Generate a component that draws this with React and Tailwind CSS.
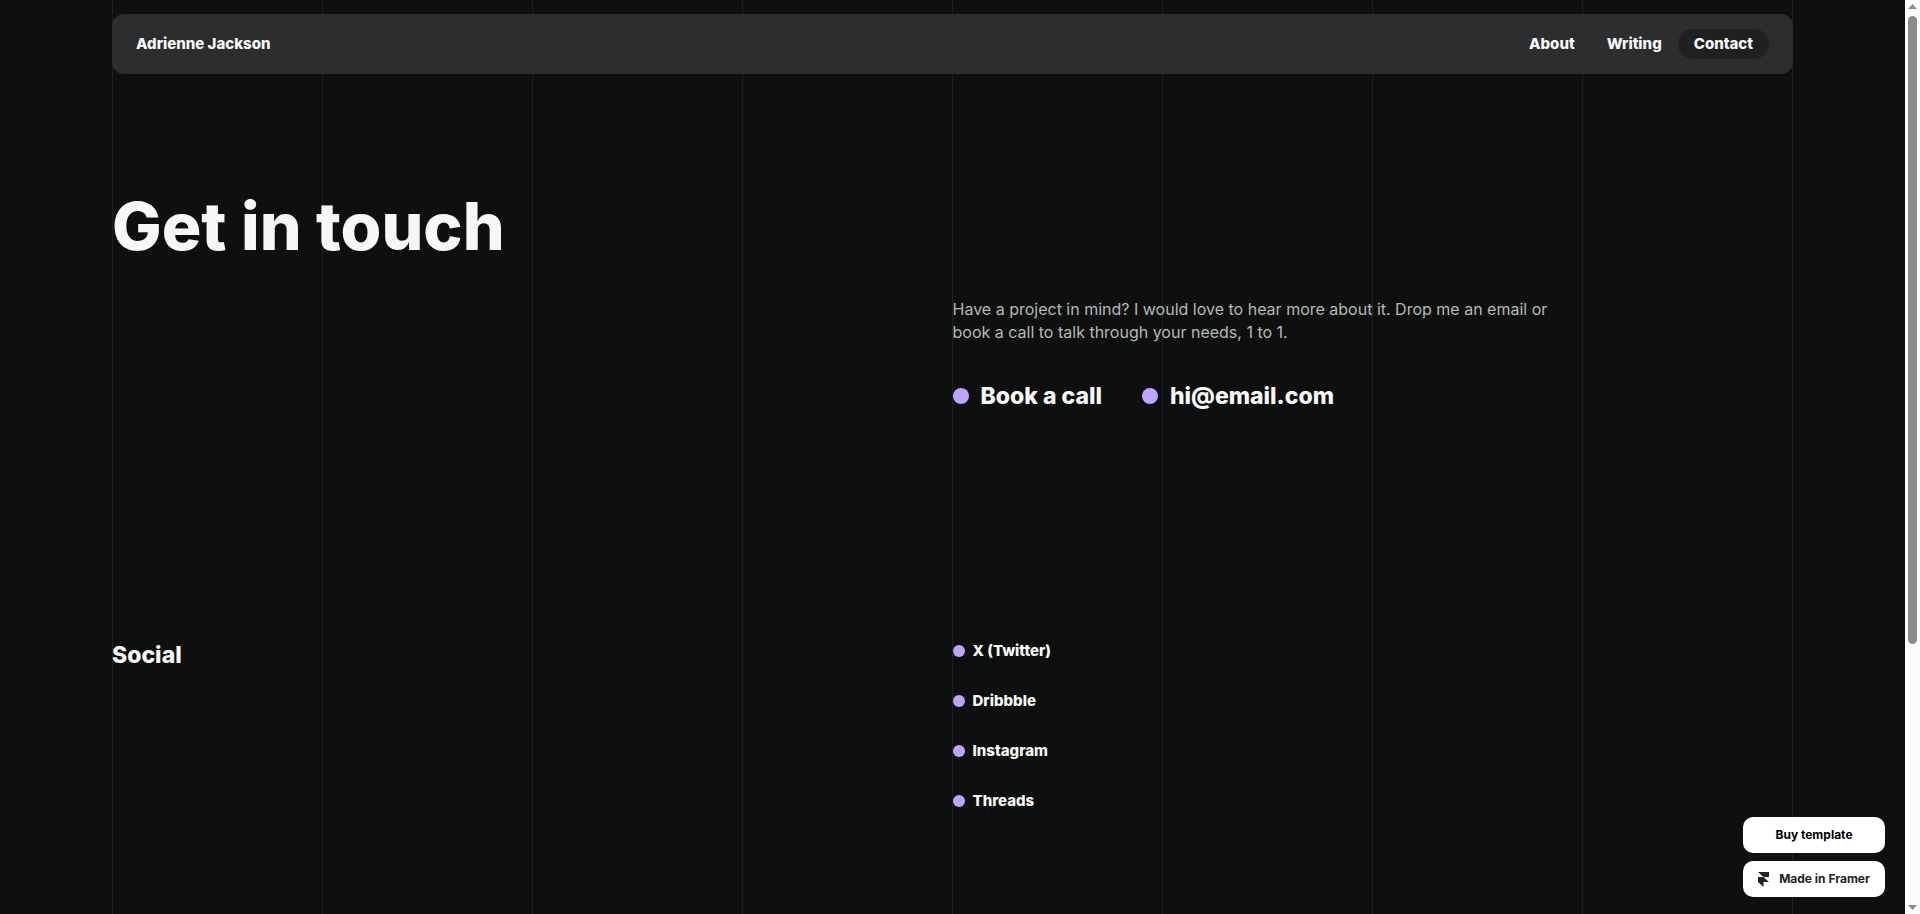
const columns = [0, 1, 2, 3, 4, 5, 6, 7];

const navLinks = [
  { label: "About", href: "#about" },
  { label: "Writing", href: "#writing" },
  { label: "Contact", href: "#contact", active: true },
];

const socials = ["X (Twitter)", "Dribbble", "Instagram", "Threads"];

function GridLines() {
  return (
    <div aria-hidden="true" className="pointer-events-none absolute inset-0 px-28">
      <div className="grid h-full grid-cols-8 border-r border-[#1f2120]">
        {columns.map((c) => (
          <div key={c} className="border-l border-[#1f2120]" />
        ))}
      </div>
    </div>
  );
}

function Nav() {
  return (
    <nav className="flex h-15 items-center justify-between rounded-xl bg-[#2c2d2c] px-6 text-[15px] leading-6 font-extrabold">
      <a href="#home">Adrienne Jackson</a>
      <ul className="flex">
        {navLinks.map((l) => (
          <li key={l.label}>
            <a
              href={l.href}
              className={
                l.active
                  ? "flex h-[30px] items-center rounded-full bg-[#1f2120] px-4"
                  : "flex h-[30px] items-center rounded-full px-4"
              }
            >
              {l.label}
            </a>
          </li>
        ))}
      </ul>
    </nav>
  );
}

function ContactLink({ href, children }) {
  return (
    <a href={href} className="flex items-center gap-3 text-[23px] leading-8 font-extrabold">
      <span className="size-4 rounded-full bg-[#c0a3ff]" />
      {children}
    </a>
  );
}

function Scrollbar() {
  return (
    <div aria-hidden="true" className="flex w-[15px] shrink-0 flex-col items-center bg-[#fcfcfc] py-1">
      <svg viewBox="0 0 9 5" className="h-[5px] w-[9px] fill-[#8b8b8b]"><path d="M4.5 0 9 5H0z" /></svg>
      <div className="mt-[7px] h-[628px] w-[9px] rounded-full bg-[#8b8b8b]" />
      <svg viewBox="0 0 9 5" className="mt-auto h-[5px] w-[9px] fill-[#8b8b8b]"><path d="M0 0h9L4.5 5z" /></svg>
    </div>
  );
}

export default function App() {
  return (
    <div className="flex min-h-screen bg-[#0e100f] font-[Inter,sans-serif] text-[#f7f7f7]">
      <div className="relative min-w-0 flex-1">
        <GridLines />
        <div className="relative px-28 pt-3.5">
          <Nav />
          <main>
            <h1 className="mt-28 text-[66px] leading-20 font-extrabold">Get in touch</h1>
            <section className="mt-8 grid grid-cols-2">
              <div className="col-start-2">
                <p className="max-w-[600px] text-base leading-[23px] text-[#b8b8b8]">
                  Have a project in mind? I would love to hear more about it. Drop me an email or
                  book a call to talk through your needs, 1 to 1.
                </p>
                <div className="mt-9 flex gap-10">
                  <ContactLink href="#book">Book a call</ContactLink>
                  <ContactLink href="mailto:hi@email.com">hi@email.com</ContactLink>
                </div>
              </div>
            </section>
            <section className="mt-[227px] grid grid-cols-2">
              <h2 className="text-[23px] leading-8 font-extrabold">Social</h2>
              <ul className="flex flex-col gap-[26px]">
                {socials.map((s) => (
                  <li key={s} className="flex">
                    <a href="#social" className="flex items-center gap-2 text-[15px] leading-6 font-extrabold">
                      <span className="size-3 rounded-full bg-[#c0a3ff]" />
                      {s}
                    </a>
                  </li>
                ))}
              </ul>
            </section>
          </main>
        </div>
        <div className="absolute right-5 bottom-[17px] flex w-[142px] flex-col gap-2 text-xs font-bold">
          <a href="#buy" className="flex h-9 items-center justify-center rounded-[10px] bg-white text-black">Buy template</a>
          <a href="#framer" className="flex h-9 items-center justify-center gap-2.5 rounded-[10px] bg-white text-[#222]">
            <svg viewBox="0 0 11 15" className="h-[15px] w-[11px] fill-current">
              <path d="M0 0h11v5H5.500zM0 5h5.500l5.500 5H0zM0 10h5.500v5z" />
            </svg>
            Made in Framer
          </a>
        </div>
      </div>
      <Scrollbar />
    </div>
  );
}
